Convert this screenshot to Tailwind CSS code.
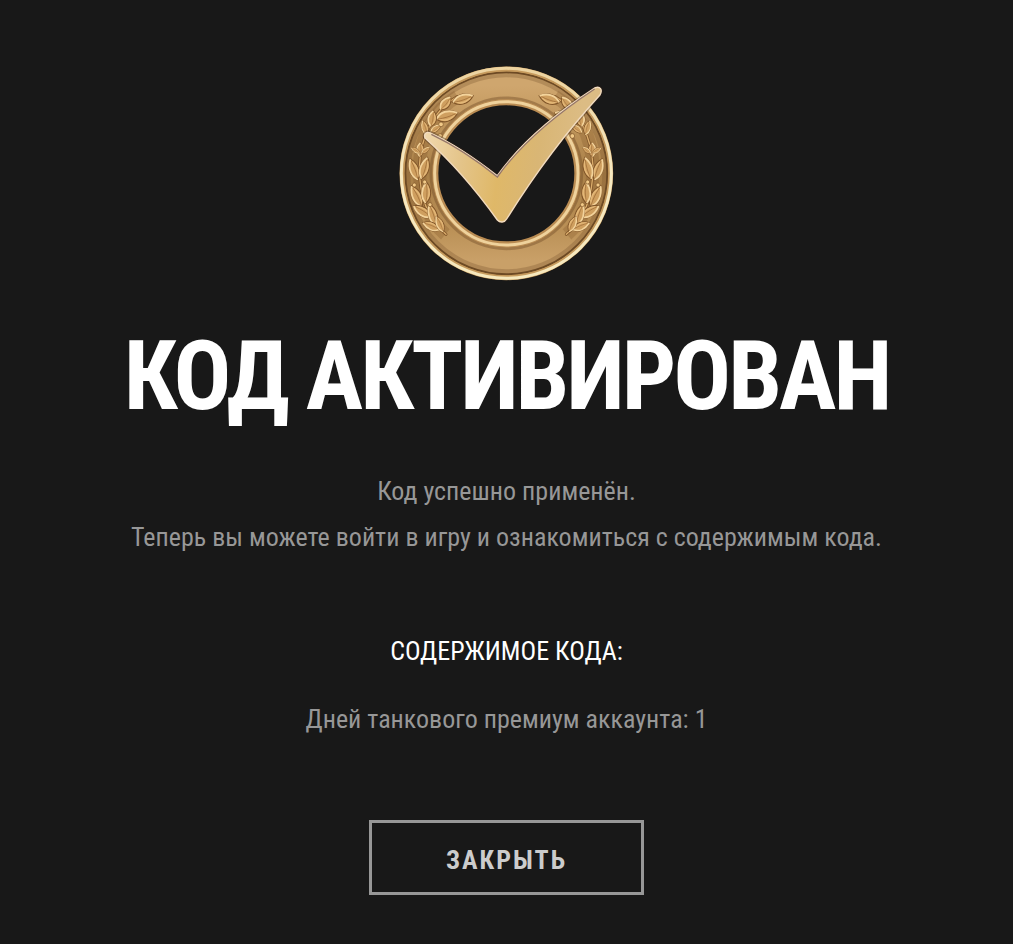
<!DOCTYPE html>
<html lang="ru">
  <head>
    <meta charset="UTF-8" />
    <meta name="viewport" content="width=device-width, initial-scale=1.0" />
    <title>Код активирован</title>
    <script src="https://cdn.jsdelivr.net/npm/@tailwindcss/browser@4"></script>
  </head>
  <body class="bg-[#181818] min-h-screen font-['Roboto_Condensed','Roboto',sans-serif] text-[26px] leading-[46px] text-[#979797]">
    <main class="flex flex-col items-center px-4 pt-[55px] pb-12 text-center">
      <!-- Эмблема -->
      <svg class="w-[230px]" viewBox="6 0 690 705" fill="none" aria-hidden="true">
        <defs>
          <linearGradient id="band" x1="0" y1="0" x2="0" y2="1">
            <stop offset="0" stop-color="#cfa66e" />
            <stop offset=".2" stop-color="#c0965c" />
            <stop offset=".5" stop-color="#a98048" />
            <stop offset=".8" stop-color="#b98f55" />
            <stop offset="1" stop-color="#c9a068" />
          </linearGradient>
          <linearGradient id="rim" x1="0" y1="0" x2="0" y2="1">
            <stop offset="0" stop-color="#ecd3a0" />
            <stop offset=".5" stop-color="#f6e9c2" />
            <stop offset="1" stop-color="#f6e8bd" />
          </linearGradient>
          <linearGradient id="tick" x1="110" y1="240" x2="560" y2="300" gradientUnits="userSpaceOnUse">
            <stop offset="0" stop-color="#f0d7ab" />
            <stop offset=".25" stop-color="#e4c489" />
            <stop offset=".5" stop-color="#dfb868" />
            <stop offset=".75" stop-color="#d9b675" />
            <stop offset="1" stop-color="#dcbc84" />
          </linearGradient>
          <g id="leaf">
            <path d="M-31 0C-18-17 8-20 31-2C12 17-15 17-31 0Z" fill="#cf9f5f" stroke="#80562a" stroke-width="3" />
            <path d="M-28-1C-14-15 8-16 28-3" stroke="#f3d39b" stroke-width="5" stroke-linecap="round" />
            <path d="M-22 2C-10 10 6 10 20 2" stroke="#e4b878" stroke-width="4" stroke-linecap="round" />
            <path d="M-27 1C-8 3 8 2 24-1" stroke="#a06e38" stroke-width="2" />
          </g>
          <g id="branch">
            <path d="M202 125C130 165 92 245 88 335C88 420 110 490 166 538" stroke="#855a2b" stroke-width="40" stroke-opacity=".3" />
            <path d="M202 125C130 165 92 245 88 335C88 420 110 490 168 538" stroke="#80562a" stroke-width="9" stroke-linecap="round" />
            <path d="M202 125C130 165 92 245 88 335C88 420 110 490 168 538" stroke="#dcae6c" stroke-width="4" stroke-linecap="round" />
            <use href="#leaf" transform="translate(219 133) rotate(-16) scale(1.05 1.1)" />
            <use href="#leaf" transform="translate(167 146) rotate(-48) scale(.8 1)" />
            <use href="#leaf" transform="translate(171 184) rotate(-14) scale(1.1 1.2)" />
            <use href="#leaf" transform="translate(127 191) rotate(-78) scale(.8 1)" />
            <use href="#leaf" transform="translate(105 218) rotate(-105) scale(.75)" />
            <use href="#leaf" transform="translate(137 222) rotate(-35) scale(.65)" />
            <use href="#leaf" transform="translate(91 284) rotate(-85) scale(.7 .9)" />
            <use href="#leaf" transform="translate(77 286) rotate(-145) scale(.5)" />
            <use href="#leaf" transform="translate(107 286) rotate(-35) scale(.5)" />
            <use href="#leaf" transform="translate(73 343) rotate(-108) scale(1.1 1.05)" />
            <use href="#leaf" transform="translate(104 340) rotate(-72) scale(1.1 1.05)" />
            <use href="#leaf" transform="translate(81 424) rotate(-114) scale(1.15 1.1)" />
            <use href="#leaf" transform="translate(109 413) rotate(-86) scale(1.05)" />
            <use href="#leaf" transform="translate(98 469) rotate(-145) scale(1.05)" />
            <use href="#leaf" transform="translate(129 480) rotate(-106) scale(1.15 1)" />
            <use href="#leaf" transform="translate(124 513) rotate(-155) scale(.9)" />
            <use href="#leaf" transform="translate(150 507) rotate(-112) scale(.85)" />
            <g fill="#f1ca88" stroke="#80562a" stroke-width="2">
              <circle cx="104" cy="381" r="6" />
              <circle cx="73" cy="390" r="6" />
              <circle cx="120" cy="449" r="6" />
              <circle cx="153" cy="208" r="7" />
              <circle cx="150" cy="243" r="7" />
            </g>
          </g>
        </defs>

        <!-- Кольцо -->
        <circle cx="349" cy="355" r="262" stroke="url(#band)" stroke-width="108" />
        <circle cx="349" cy="355" r="297" stroke="#75502a" stroke-width="18" stroke-opacity=".3" />
        <circle cx="349" cy="355" r="303" stroke="#6d4a24" stroke-width="6" />
        <circle cx="349" cy="355" r="313" stroke="#c69a5c" stroke-width="15" />
        <circle cx="349" cy="355" r="315" stroke="url(#rim)" stroke-width="9" />
        <circle cx="349" cy="355" r="226" stroke="#75502a" stroke-width="9" stroke-opacity=".45" />
        <circle cx="349" cy="355" r="213" stroke="#b98b52" stroke-width="18" />
        <circle cx="349" cy="355" r="215" stroke="#efd29c" stroke-width="9" />

        <!-- Лавровые ветви -->
        <use href="#branch" />
        <use href="#branch" transform="translate(697 0) scale(-1 1)" />

        <!-- Галочка -->
        <path
          d="M105 249C100 236 110 229 122 234C195 268 258 312 322 362C384 275 472 192 616 98C630 93 639 104 630 120C535 224 440 348 350 492C344 503 330 504 322 495C264 414 190 325 105 249Z"
          stroke="#2b1b10" stroke-opacity=".35" stroke-width="11" stroke-linejoin="round"
        />
        <path
          d="M105 249C100 236 110 229 122 234C195 268 258 312 322 362C384 275 472 192 616 98C630 93 639 104 630 120C535 224 440 348 350 492C344 503 330 504 322 495C264 414 190 325 105 249Z"
          fill="url(#tick)" stroke="#f2dcc0" stroke-width="4" stroke-linejoin="round"
        />
        <path d="M124 238C195 272 258 314 322 366C384 279 472 196 614 102" stroke="#95776a" stroke-width="4" />
      </svg>

      <h1 class="mt-[38px] text-[96px] leading-[96px] font-bold uppercase tracking-[-3px] text-white">Код активирован</h1>

      <p class="mt-11">
        Код успешно применён.<br />
        Теперь вы можете войти в игру и ознакомиться с содержимым кода.
      </p>

      <h2 class="mt-[68px] uppercase text-white">Содержимое кода:</h2>
      <p class="mt-[22px]">Дней танкового премиум аккаунта: 1</p>

      <button type="button" class="mt-[78px] border-3 border-[#979797] px-[74px] pt-[14px] pb-[9px] font-bold uppercase tracking-[2px] text-[#cccccc] hover:border-white hover:text-white">
        Закрыть
      </button>
    </main>
  </body>
</html>
